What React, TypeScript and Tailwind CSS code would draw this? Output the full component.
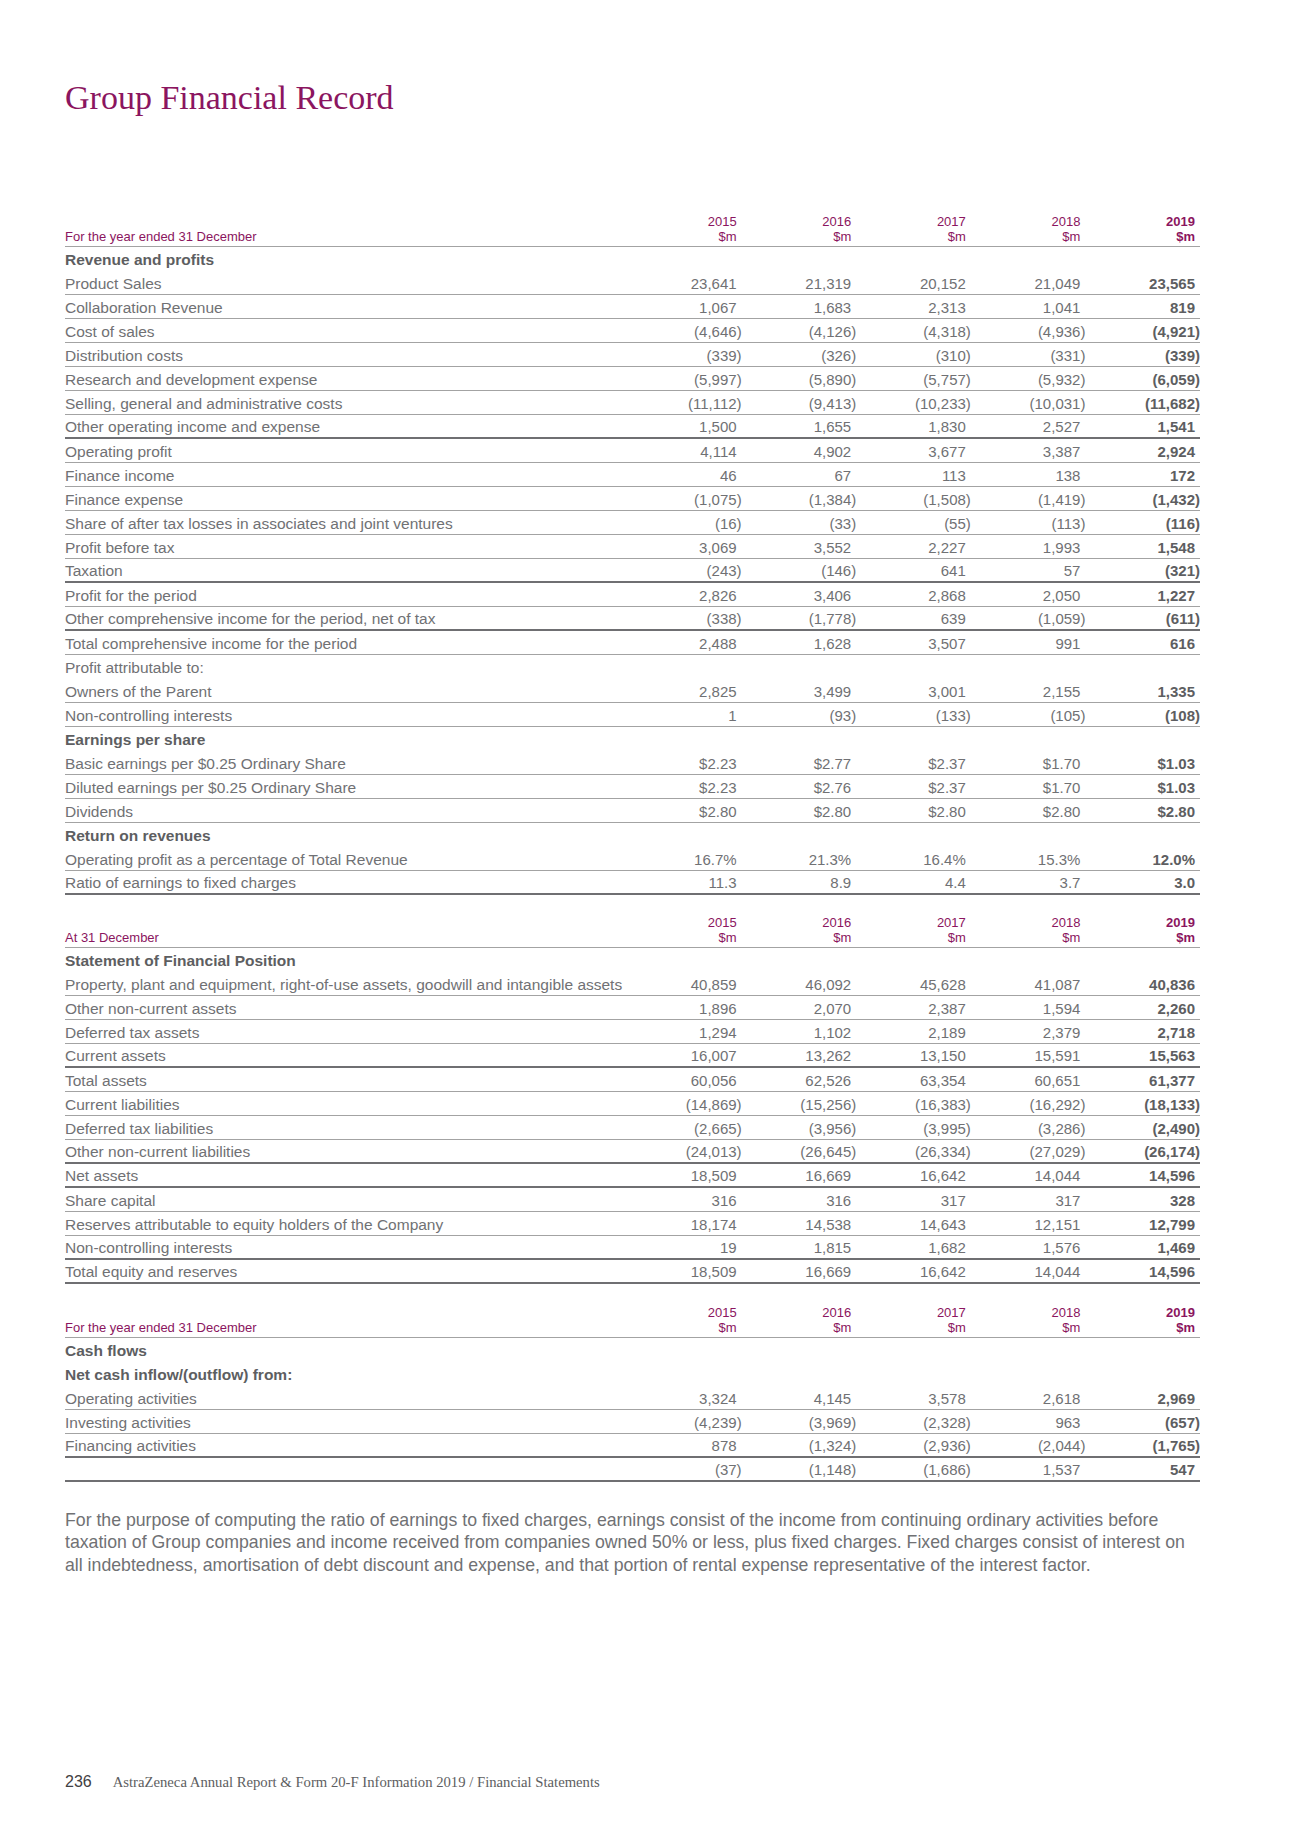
type Line = 'none' | 'thin' | 'thick';

interface Row {
  label: string;
  values?: string[];
  heading?: boolean;
  line?: Line;
}

const YEARS = ['2015', '2016', '2017', '2018', '2019'];

const income: Row[] = [
  { label: 'Revenue and profits', heading: true, line: 'none' },
  { label: 'Product Sales', values: ['23,641', '21,319', '20,152', '21,049', '23,565'] },
  { label: 'Collaboration Revenue', values: ['1,067', '1,683', '2,313', '1,041', '819'] },
  { label: 'Cost of sales', values: ['(4,646)', '(4,126)', '(4,318)', '(4,936)', '(4,921)'] },
  { label: 'Distribution costs', values: ['(339)', '(326)', '(310)', '(331)', '(339)'] },
  { label: 'Research and development expense', values: ['(5,997)', '(5,890)', '(5,757)', '(5,932)', '(6,059)'] },
  { label: 'Selling, general and administrative costs', values: ['(11,112)', '(9,413)', '(10,233)', '(10,031)', '(11,682)'] },
  { label: 'Other operating income and expense', values: ['1,500', '1,655', '1,830', '2,527', '1,541'], line: 'thick' },
  { label: 'Operating profit', values: ['4,114', '4,902', '3,677', '3,387', '2,924'] },
  { label: 'Finance income', values: ['46', '67', '113', '138', '172'] },
  { label: 'Finance expense', values: ['(1,075)', '(1,384)', '(1,508)', '(1,419)', '(1,432)'] },
  { label: 'Share of after tax losses in associates and joint ventures', values: ['(16)', '(33)', '(55)', '(113)', '(116)'] },
  { label: 'Profit before tax', values: ['3,069', '3,552', '2,227', '1,993', '1,548'] },
  { label: 'Taxation', values: ['(243)', '(146)', '641', '57', '(321)'], line: 'thick' },
  { label: 'Profit for the period', values: ['2,826', '3,406', '2,868', '2,050', '1,227'] },
  { label: 'Other comprehensive income for the period, net of tax', values: ['(338)', '(1,778)', '639', '(1,059)', '(611)'], line: 'thick' },
  { label: 'Total comprehensive income for the period', values: ['2,488', '1,628', '3,507', '991', '616'] },
  { label: 'Profit attributable to:', line: 'none' },
  { label: 'Owners of the Parent', values: ['2,825', '3,499', '3,001', '2,155', '1,335'] },
  { label: 'Non-controlling interests', values: ['1', '(93)', '(133)', '(105)', '(108)'] },
  { label: 'Earnings per share', heading: true, line: 'none' },
  { label: 'Basic earnings per $0.25 Ordinary Share', values: ['$2.23', '$2.77', '$2.37', '$1.70', '$1.03'] },
  { label: 'Diluted earnings per $0.25 Ordinary Share', values: ['$2.23', '$2.76', '$2.37', '$1.70', '$1.03'] },
  { label: 'Dividends', values: ['$2.80', '$2.80', '$2.80', '$2.80', '$2.80'] },
  { label: 'Return on revenues', heading: true, line: 'none' },
  { label: 'Operating profit as a percentage of Total Revenue', values: ['16.7%', '21.3%', '16.4%', '15.3%', '12.0%'] },
  { label: 'Ratio of earnings to fixed charges', values: ['11.3', '8.9', '4.4', '3.7', '3.0'], line: 'thick' },
];

const position: Row[] = [
  { label: 'Statement of Financial Position', heading: true, line: 'none' },
  { label: 'Property, plant and equipment, right-of-use assets, goodwill and intangible assets', values: ['40,859', '46,092', '45,628', '41,087', '40,836'] },
  { label: 'Other non-current assets', values: ['1,896', '2,070', '2,387', '1,594', '2,260'] },
  { label: 'Deferred tax assets', values: ['1,294', '1,102', '2,189', '2,379', '2,718'] },
  { label: 'Current assets', values: ['16,007', '13,262', '13,150', '15,591', '15,563'], line: 'thick' },
  { label: 'Total assets', values: ['60,056', '62,526', '63,354', '60,651', '61,377'] },
  { label: 'Current liabilities', values: ['(14,869)', '(15,256)', '(16,383)', '(16,292)', '(18,133)'] },
  { label: 'Deferred tax liabilities', values: ['(2,665)', '(3,956)', '(3,995)', '(3,286)', '(2,490)'] },
  { label: 'Other non-current liabilities', values: ['(24,013)', '(26,645)', '(26,334)', '(27,029)', '(26,174)'], line: 'thick' },
  { label: 'Net assets', values: ['18,509', '16,669', '16,642', '14,044', '14,596'], line: 'thick' },
  { label: 'Share capital', values: ['316', '316', '317', '317', '328'] },
  { label: 'Reserves attributable to equity holders of the Company', values: ['18,174', '14,538', '14,643', '12,151', '12,799'] },
  { label: 'Non-controlling interests', values: ['19', '1,815', '1,682', '1,576', '1,469'], line: 'thick' },
  { label: 'Total equity and reserves', values: ['18,509', '16,669', '16,642', '14,044', '14,596'], line: 'thick' },
];

const cash: Row[] = [
  { label: 'Cash flows', heading: true, line: 'none' },
  { label: 'Net cash inflow/(outflow) from:', heading: true, line: 'none' },
  { label: 'Operating activities', values: ['3,324', '4,145', '3,578', '2,618', '2,969'] },
  { label: 'Investing activities', values: ['(4,239)', '(3,969)', '(2,328)', '963', '(657)'] },
  { label: 'Financing activities', values: ['878', '(1,324)', '(2,936)', '(2,044)', '(1,765)'], line: 'thick' },
  { label: '', values: ['(37)', '(1,148)', '(1,686)', '1,537', '547'], line: 'thick' },
];

// closing brackets hang outside the column, so plain figures get an invisible one
function Figure({ value }: { value: string }) {
  if (value.endsWith(')')) return <>{value}</>;
  return (
    <>
      {value}
      <span className="invisible">)</span>
    </>
  );
}

function Table({ caption, rows }: { caption: string; rows: Row[] }) {
  return (
    <div className="w-[1135px]">
      <div className="grid grid-cols-[1fr_repeat(5,114.6px)] items-end border-b border-[#a3a3a3] pb-[2px] text-[13px] leading-[15px] text-[#8b1560]">
        <div>{caption}</div>
        {YEARS.map((y) => (
          <div key={y} className={`pr-[5px] text-right ${y === '2019' ? 'font-bold' : ''}`}>
            {y}
            <br />
            $m
          </div>
        ))}
      </div>

      {rows.map((row, i) => {
        const line = row.line ?? 'thin';
        return (
          <div
            key={i}
            className={`grid h-[24px] grid-cols-[1fr_repeat(5,114.6px)] items-center pt-[2px] text-[15.5px] leading-[20px] ${
              line === 'thick'
                ? 'border-b-2 border-[#6f6f72]'
                : line === 'thin'
                  ? 'border-b border-[#a3a3a3]'
                  : ''
            }`}
          >
            <div className={row.heading ? 'font-bold text-[#5d5e61]' : 'text-[#707174]'}>{row.label}</div>
            {row.values?.map((v, j) => (
              <div
                key={j}
                className={`text-right text-[15px] ${j === 4 ? 'font-bold text-[#5d5e61]' : 'text-[#707174]'}`}
              >
                <Figure value={v} />
              </div>
            ))}
          </div>
        );
      })}
    </div>
  );
}

export default function App() {
  return (
    <div className="flex h-[1832px] w-[1296px] flex-col bg-white px-[65px] pb-[40px] font-['Liberation_Sans',Arial,sans-serif]">
      <h1 className="mt-[78px] font-['Liberation_Serif','Times_New_Roman',serif] text-[34px] leading-[40px] text-[#8b1560]">
        Group Financial Record
      </h1>

      <div className="mt-[96px]">
        <Table caption="For the year ended 31 December" rows={income} />
      </div>

      <div className="mt-[20px]">
        <Table caption="At 31 December" rows={position} />
      </div>

      <div className="mt-[21px]">
        <Table caption="For the year ended 31 December" rows={cash} />
      </div>

      <p className="mt-[27px] text-[17.7px] leading-[22.3px] text-[#707174]">
        For the purpose of computing the ratio of earnings to fixed charges, earnings consist of the income from continuing ordinary activities before
        <br />
        taxation of Group companies and income received from companies owned 50% or less, plus fixed charges. Fixed charges consist of interest on
        <br />
        all indebtedness, amortisation of debt discount and expense, and that portion of rental expense representative of the interest factor.
      </p>

      <div className="mt-auto flex items-baseline gap-[21px] leading-[20px]">
        <span className="text-[16px] text-[#3f4042]">236</span>
        <span className="font-['Liberation_Serif','Times_New_Roman',serif] text-[14.7px] text-[#5d5e61]">
          AstraZeneca Annual Report &amp; Form 20-F Information 2019 / Financial Statements
        </span>
      </div>
    </div>
  );
}
